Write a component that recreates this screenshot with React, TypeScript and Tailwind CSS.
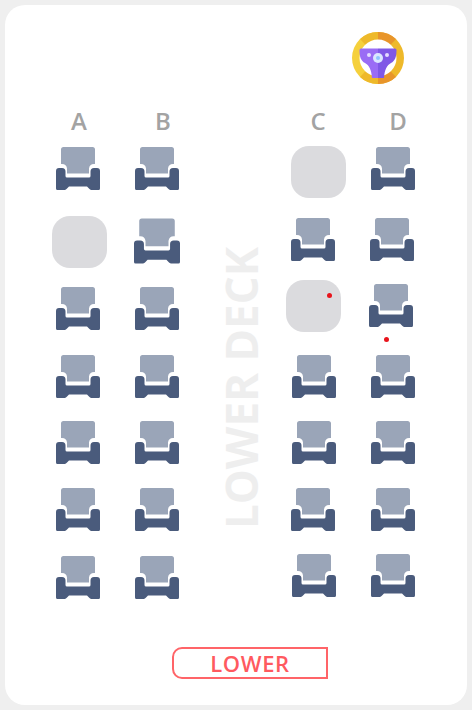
function Seat({ className = 'w-11 h-11', children }: { className?: string; children?: React.ReactNode }) {
  return (
    <div className={`relative shrink-0 ${className}`}>
      <svg viewBox="0 0 44 44" className="block w-full h-full">
        <path
          d="M5 2.500Q5 0 7.500 0H36.500Q39 0 39 2.500V17H38Q33.500 17 33 21.500V26.500H11V21.500Q10.500 17 6 17H5Z"
          fill="#9aa5b8"
        />
        <path
          d="M0 24Q0 21 3 21H6Q9.500 21 9.500 24.500V29Q9.500 30.500 11 30.500H33Q34.500 30.500 34.500 29V24.500Q34.500 21 38 21H41Q44 21 44 24V41.500Q44 43 42.500 43H35.500Q34.500 43 33.500 42L31 39.500H13L10.500 42Q9.500 43 8.500 43H1.500Q0 43 0 41.500Z"
          fill="#4a5b7c"
        />
      </svg>
      {children}
    </div>
  )
}

function Blank({ className = '', children }: { className?: string; children?: React.ReactNode }) {
  return <div className={`relative shrink-0 w-[55px] h-[52px] rounded-[18px] bg-[#dbdbde] ${className}`}>{children}</div>
}

function Dot({ className = '' }: { className?: string }) {
  return <span className={`absolute w-[5px] h-[5px] rounded-full bg-[#e8141c] ${className}`} />
}

function Label({ text, className = '' }: { text: string; className?: string }) {
  return <div className={`w-10 h-[34px] leading-[34px] text-center text-[24px] font-semibold text-[#a3a3a3] ${className}`}>{text}</div>
}

function SteeringWheel() {
  return (
    <svg viewBox="0 0 52 52" className="w-[52px] h-[52px]">
      <path d="M26 0A26 26 0 0 0 26 52Z" fill="#f5d03c" />
      <path d="M26 0A26 26 0 0 1 26 52Z" fill="#eeb92a" />
      <path d="M26 0A26 26 0 0 0 8 7L26 26Z" fill="#eeb92a" />
      <path d="M26 0A26 26 0 0 1 44 7L26 26Z" fill="#e8952a" />
      <path d="M26 52A26 26 0 0 1 8 45L26 26Z" fill="#eeb92a" />
      <path d="M26 52A26 26 0 0 0 44 45L26 26Z" fill="#e8952a" />
      <circle cx="26" cy="26" r="18.500" fill="#ffffff" />
      <path d="M26 16.500H9Q7.500 16.500 7.500 18C7.500 25 9 29 13 31C17 33 19.500 38 20 46H26Z" fill="#9a6cf5" />
      <path d="M26 16.500H43Q44.500 16.500 44.500 18C44.500 25 43 29 39 31C35 33 32.500 38 32 46H26Z" fill="#7f58e6" />
      <circle cx="26" cy="26" r="5" fill="#dbe6ff" />
      <circle cx="26" cy="26" r="2" fill="#8fc4ff" />
      <circle cx="17" cy="23" r="2" fill="#e3dcff" />
      <circle cx="35" cy="23" r="2" fill="#e3dcff" />
    </svg>
  )
}

export default function App() {
  return (
    <div className="w-[472px] h-[710px] bg-[#efefef] p-[5px] font-['Open_Sans',sans-serif]">
      <div className="w-[462px] h-[700px] rounded-[20px] bg-white flex flex-col">
        <div className="flex justify-end pt-[27px] pr-[63px]">
          <SteeringWheel />
        </div>

        <div className="flex mt-[20px] pl-[47px]">
          {/* column A */}
          <div className="w-[80px] flex flex-col items-start">
            <Label text="A" className="ml-[7px]" />
            <Seat className="w-11 h-11 ml-[4px] mt-[9px]" />
            <Blank className="mt-[25px]" />
            <Seat className="w-11 h-11 ml-[4px] mt-[19px]" />
            <Seat className="w-11 h-11 ml-[4px] mt-[24px]" />
            <Seat className="w-11 h-11 ml-[4px] mt-[22px]" />
            <Seat className="w-11 h-11 ml-[4px] mt-[23px]" />
            <Seat className="w-11 h-11 ml-[4px] mt-[24px]" />
          </div>

          {/* column B */}
          <div className="w-[90px] flex flex-col items-start">
            <Label text="B" className="ml-[11px]" />
            <Seat className="w-11 h-11 ml-[3px] mt-[9px]" />
            <Seat className="w-[46px] h-[47px] ml-[2px] mt-[27px]" />
            <Seat className="w-11 h-11 ml-[3px] mt-[22px]" />
            <Seat className="w-11 h-11 ml-[3px] mt-[24px]" />
            <Seat className="w-11 h-11 ml-[3px] mt-[22px]" />
            <Seat className="w-11 h-11 ml-[3px] mt-[23px]" />
            <Seat className="w-11 h-11 ml-[3px] mt-[24px]" />
          </div>

          {/* aisle */}
          <div className="w-[60px] pt-[143px] -ml-[1px] mr-[5px]">
            <div className="[writing-mode:vertical-rl] rotate-180 text-[44px] leading-[40px] font-bold text-[#eeeeee] whitespace-nowrap">
              LOWER DECK
            </div>
          </div>

          {/* column C */}
          <div className="w-[82px] flex flex-col items-start">
            <Label text="C" className="ml-[12px]" />
            <Blank className="ml-[5px] mt-[8px]" />
            <Seat className="w-11 h-11 ml-[5px] mt-[20px]" />
            <Blank className="mt-[18px]">
              <Dot className="left-[41px] top-[13px]" />
            </Blank>
            <Seat className="w-11 h-11 ml-[6px] mt-[23px]" />
            <Seat className="w-11 h-11 ml-[6px] mt-[22px]" />
            <Seat className="w-11 h-11 ml-[5px] mt-[23px]" />
            <Seat className="w-11 h-11 ml-[6px] mt-[22px]" />
          </div>

          {/* column D */}
          <div className="w-[60px] flex flex-col items-start">
            <Label text="D" className="ml-[10px]" />
            <Seat className="w-11 h-11 ml-[3px] mt-[9px]" />
            <Seat className="w-11 h-11 ml-[2px] mt-[27px]" />
            <Seat className="w-11 h-11 ml-[1px] mt-[22px]">
              <Dot className="left-[15px] top-[53px]" />
            </Seat>
            <Seat className="w-11 h-11 ml-[3px] mt-[27px]" />
            <Seat className="w-11 h-11 ml-[3px] mt-[22px]" />
            <Seat className="w-11 h-11 ml-[3px] mt-[23px]" />
            <Seat className="w-11 h-11 ml-[3px] mt-[22px]" />
          </div>
        </div>

        <div className="ml-[167px] mt-[47px] w-[156px] h-[32px] border-2 border-[#ff6468] rounded-l-[10px] flex items-center justify-center text-[22px] tracking-[0.6px] font-semibold text-[#ff5a5f]">
          LOWER
        </div>
      </div>
    </div>
  )
}
